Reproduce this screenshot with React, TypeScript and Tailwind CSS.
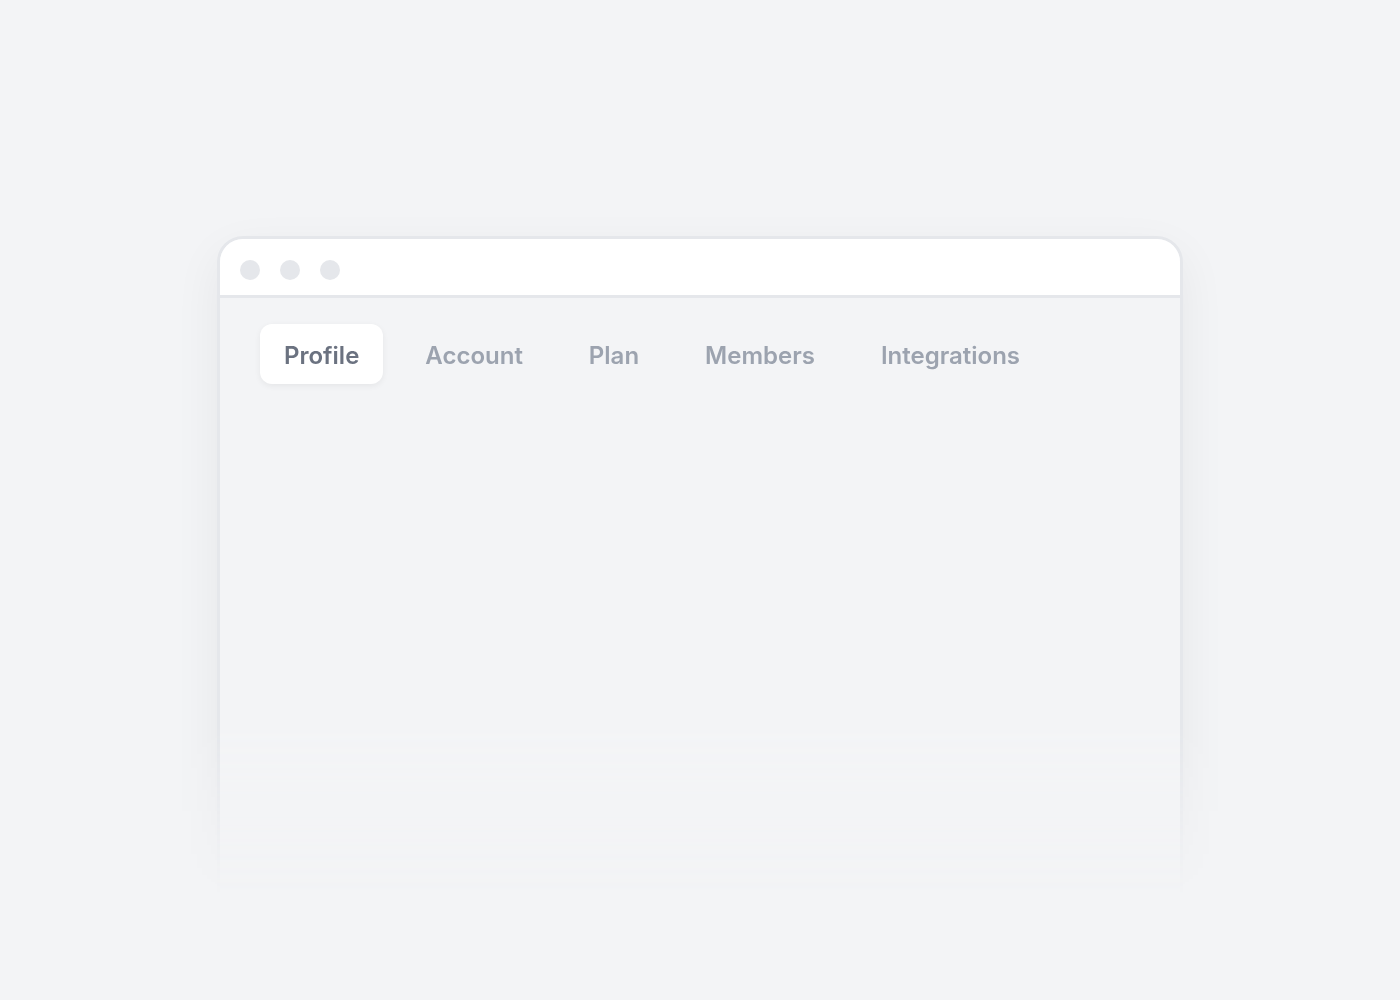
import React from 'react';

const tabs = ['Profile', 'Account', 'Plan', 'Members', 'Integrations'];

const App: React.FC = () => {
  return (
    <div className="h-screen overflow-hidden bg-[#f3f4f6] flex justify-center pt-[196px] font-['Inter',sans-serif]">
      {/* wrapper carries the fade so the shadow fades too */}
      <div className="px-10 pt-10 h-[804px] [mask-image:linear-gradient(to_bottom,black_530px,transparent_700px)]">
        <div className="w-[966px] h-[900px] rounded-[26px] border-[3px] border-[#e5e7eb] bg-[#f3f4f6] shadow-[0_16px_48px_rgba(0,0,0,0.06)] overflow-hidden">
          {/* Title bar */}
          <div className="h-[59px] bg-white border-b-[3px] border-[#e5e7eb] flex items-start gap-5 pl-5 pt-[21px]">
            <span className="w-5 h-5 rounded-full bg-[#e5e7eb]" />
            <span className="w-5 h-5 rounded-full bg-[#e5e7eb]" />
            <span className="w-5 h-5 rounded-full bg-[#e5e7eb]" />
          </div>

          {/* Tabs */}
          <nav className="flex items-center gap-[18px] px-10 pt-[26px]">
            {tabs.map((tab, i) => (
              <div
                key={tab}
                className={`h-[60px] px-6 pt-1 flex items-center rounded-xl text-2xl font-semibold ${
                  i === 0
                    ? 'bg-white text-[#6b7280] shadow-[0_2px_6px_rgba(0,0,0,0.06)]'
                    : 'text-[#9ca3af]'
                }`}
              >
                {tab}
              </div>
            ))}
          </nav>
        </div>
      </div>
    </div>
  );
};

export default App;
